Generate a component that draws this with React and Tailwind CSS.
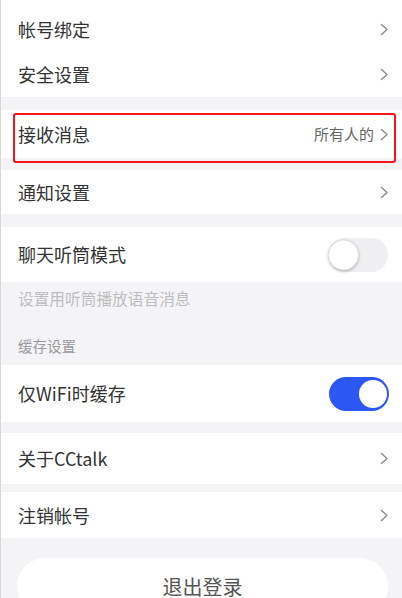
import React, { useState } from 'react';

// 右侧小箭头
const Chevron = () => (
  <svg width="9" height="13" viewBox="0 0 9 13" fill="none" className="shrink-0">
    <path d="M1.5 1.5 L7 6.5 L1.5 11.5" stroke="#8a8a8a" strokeWidth="1.4" strokeLinecap="round" strokeLinejoin="round" />
  </svg>
);

const Toggle = ({ on, onChange }) => (
  <button
    onClick={() => onChange(!on)}
    className={`relative w-[60px] h-[34px] rounded-full transition-colors ${on ? 'bg-[#2d57f2]' : 'bg-[#efeff1]'}`}
  >
    <span
      className={`absolute top-1/2 -translate-y-1/2 rounded-full bg-white ${
        on ? 'right-[2px] w-[28px] h-[28px]' : 'left-0 w-[31px] h-[31px] shadow-[0_1px_3px_rgba(0,0,0,0.25)] border border-[#e2e2e2]'
      }`}
    />
  </button>
);

const Row = ({ label, value, height, extra = '', children }) => (
  <div className={`relative flex items-center justify-between bg-white pl-[17px] pr-[13px] ${height} ${extra}`}>
    <span className="text-[18px] text-[#333]">{label}</span>
    <div className="flex items-center gap-[6px]">
      {value && <span className="text-[15px] text-[#666]">{value}</span>}
      {children || <Chevron />}
    </div>
  </div>
);

const App = () => {
  const [earpiece, setEarpiece] = useState(false);
  const [wifiOnly, setWifiOnly] = useState(true);

  return (
    <div
      className="w-[402px] h-[598px] overflow-hidden bg-[#f4f4f6] border-l border-[#d6d6d6]"
      style={{ fontFamily: '"Noto Sans CJK SC", "Noto Sans", sans-serif' }}
    >
      <Row label="帐号绑定" height="h-[52px]" extra="pt-[6px]" />
      <Row label="安全设置" height="h-[45px]" />

      <div className="h-[13px]" />
      <Row label="接收消息" value="所有人的" height="h-[48px]">
        <Chevron />
        {/* 标注框 */}
        <div className="absolute left-[12px] right-[6px] top-[3px] h-[50px] border-2 border-[#f5141b] rounded-[3px] pointer-events-none" />
      </Row>

      <div className="h-[12px]" />
      <Row label="通知设置" height="h-[44px]" />

      <div className="h-[13px]" />
      <Row label="聊天听筒模式" height="h-[55px]" extra="pr-[14px]">
        <Toggle on={earpiece} onChange={setEarpiece} />
      </Row>

      <div className="h-[83px] pl-[17px] flex flex-col">
        <div className="h-[34px] flex items-center text-[15.7px] text-[#bdbdc0]">设置用听筒播放语音消息</div>
        <div className="flex-1 flex items-end pb-[8px] text-[14.5px] text-[#9a9a9d]">缓存设置</div>
      </div>

      <Row label="仅WiFi时缓存" height="h-[57px]" extra="pr-[7px]">
        <Toggle on={wifiOnly} onChange={setWifiOnly} />
      </Row>

      <div className="h-[11px]" />
      <Row label="关于CCtalk" height="h-[51px]" />

      <div className="h-[8px]" />
      <Row label="注销帐号" height="h-[46px]" />

      <div className="px-[16px] pt-[20px] pr-[14px]">
        <button className="w-full h-[56px] rounded-[28px] bg-white text-[20px] text-[#555] flex items-center justify-center pt-[2px]">
          退出登录
        </button>
      </div>
    </div>
  );
};

export default App;
